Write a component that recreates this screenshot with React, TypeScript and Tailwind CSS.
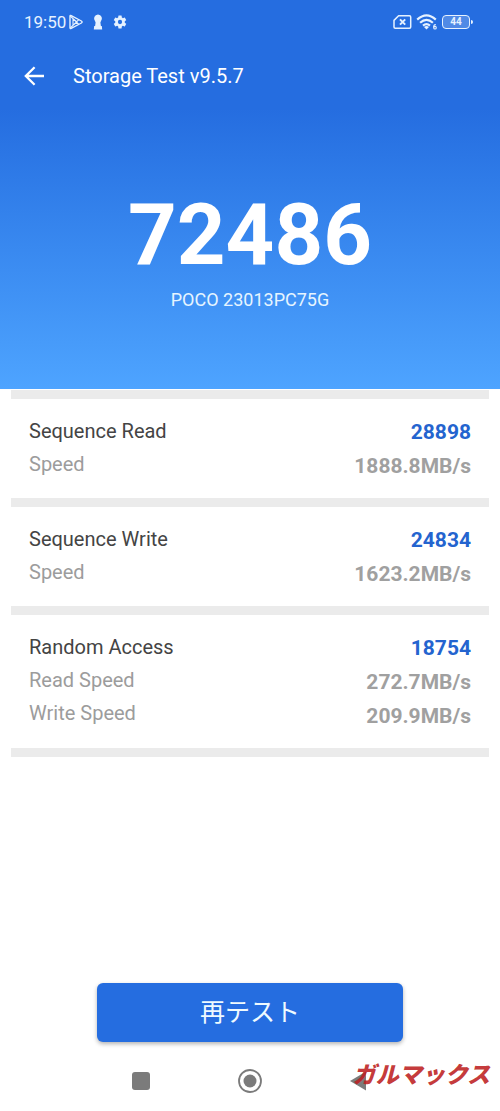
import React from "react";

type Line = { label: string; value: string };
type Result = { title: string; score: string; lines: Line[] };

const results: Result[] = [
  { title: "Sequence Read", score: "28898", lines: [{ label: "Speed", value: "1888.8MB/s" }] },
  { title: "Sequence Write", score: "24834", lines: [{ label: "Speed", value: "1623.2MB/s" }] },
  {
    title: "Random Access",
    score: "18754",
    lines: [
      { label: "Read Speed", value: "272.7MB/s" },
      { label: "Write Speed", value: "209.9MB/s" },
    ],
  },
];

function StatusBar() {
  return (
    <div className="flex h-11 items-center justify-between pr-[27px] pl-6 text-[#e6f2ff]">
      <div className="flex items-center">
        <span className="text-[17px] leading-5">19:50</span>
        <svg className="ml-[2px] h-4 w-4" viewBox="0 0 16 16" fill="none" stroke="currentColor" strokeWidth="1.4" strokeLinejoin="round" aria-hidden="true">
          <path d="M2 2.2Q2 1 3.2 1.6L13.4 7Q14.8 8 13.4 9L3.2 14.4Q2 15 2 13.8Z" />
          <path d="M2.3 2L10.8 10.4M2.3 14L10.8 5.6M5 4.8V11.2L9 8Z" strokeWidth="1.1" />
        </svg>
        <svg className="ml-2 h-4 w-3" viewBox="0 0 12 16" fill="currentColor" aria-hidden="true">
          <path d="M6 .6a4 4 0 0 0-2.8 6.8L3.6 8.6 3.1 12H2.2L1.8 15.4h8.4L9.8 12H8.9l-.5-3.4.4-1.2A4 4 0 0 0 6 .6Z" />
        </svg>
        <svg className="ml-2 h-4 w-4" viewBox="0 0 24 24" fill="currentColor" aria-hidden="true">
          <path d="M19.14 12.94c.04-.3.06-.61.06-.94s-.02-.64-.07-.94l2.03-1.58a.49.49 0 0 0 .12-.61l-1.92-3.32a.49.49 0 0 0-.59-.22l-2.39.96a7 7 0 0 0-1.62-.94l-.36-2.54a.48.48 0 0 0-.48-.41h-3.84a.47.47 0 0 0-.47.41l-.36 2.54c-.59.24-1.13.57-1.62.94l-2.39-.96a.48.48 0 0 0-.59.22L2.74 8.87a.47.47 0 0 0 .12.61l2.03 1.58a7 7 0 0 0 0 1.88l-2.03 1.58a.49.49 0 0 0-.12.61l1.92 3.32c.12.22.37.29.59.22l2.39-.96c.5.38 1.03.7 1.62.94l.36 2.54c.05.24.24.41.48.41h3.84c.24 0 .44-.17.47-.41l.36-2.54a7 7 0 0 0 1.62-.94l2.39.96c.22.08.47 0 .59-.22l1.92-3.32a.47.47 0 0 0-.12-.61zM12 15.2a3.2 3.2 0 1 1 0-6.4 3.2 3.2 0 0 1 0 6.4Z" />
        </svg>
      </div>
      <div className="flex items-center">
        <svg className="h-4 w-[19px]" viewBox="0 0 19 16" fill="none" stroke="currentColor" strokeWidth="1.5" strokeLinejoin="round" aria-hidden="true">
          <path d="M5.6 1.8H16.5Q17.7 1.8 17.7 3V13Q17.7 14.2 16.5 14.2H2.2Q1 14.2 1 13V6.4Z" />
          <path d="M7 5.4L12.2 10.6M12.2 5.4L7 10.6" strokeWidth="2" />
        </svg>
        <svg className="ml-1 h-[18px] w-[22px]" viewBox="0 0 22 18" fill="none" stroke="currentColor" strokeWidth="2.2" aria-hidden="true">
          <path d="M1.2 6.6Q10.5-1.8 19.8 6.6M4.1 9.8Q10.5 4 16.9 9.8M7 12.7Q10.5 9.7 14 12.7" />
          <path d="M8 14Q10.5 11.9 13 14L10.5 16.6Z" fill="currentColor" stroke="none" />
          <path d="M19.8 11.6Q17.6 11.4 17.7 14.4" strokeWidth="1.1" />
          <circle cx="19" cy="14.7" r="1.3" strokeWidth="1.1" />
        </svg>
        <div className="ml-1 flex items-center gap-px">
          <div className="flex h-[14px] w-7 items-center justify-center rounded-[4px] border border-current bg-white/20 text-[10px] leading-none font-bold">
            44
          </div>
          <div className="h-1 w-[2px] rounded-r-sm bg-current" />
        </div>
      </div>
    </div>
  );
}

function ResultCard({ result }: { result: Result }) {
  return (
    <dl className="flex justify-between border-b-9 border-[#ebebeb] px-[18px] pt-4 pb-[15px] text-xl">
      <div>
        <dt className="leading-[33px] text-[#444444]">{result.title}</dt>
        {result.lines.map((line) => (
          <dt key={line.label} className="leading-[33px] text-[#9c9c9c]">{line.label}</dt>
        ))}
      </div>
      <div className="text-right text-[21px] font-bold">
        <dd className="leading-[34px] text-[#2464cf]">{result.score}</dd>
        {result.lines.map((line) => (
          <dd key={line.label} className="leading-[34px] text-[#a0a0a0]">{line.value}</dd>
        ))}
      </div>
    </dl>
  );
}

export default function App() {
  return (
    <div className="flex min-h-screen flex-col bg-white font-['Roboto','Noto_Sans_CJK_JP',sans-serif]">
      <header className="bg-linear-to-b from-[#256de0] from-28% to-[#4ea4ff] pb-[75px] text-white">
        <StatusBar />
        <div className="flex h-16 items-center pl-6">
          <button type="button" aria-label="Back" className="h-5 w-5">
            <svg viewBox="0 0 20 20" className="h-5 w-5" fill="none" stroke="currentColor" strokeWidth="2.3" aria-hidden="true">
              <path d="M20 10H2.2M10.6 1.2L1.8 10L10.6 18.8" />
            </svg>
          </button>
          <h1 className="ml-[29px] text-xl">Storage Test v9.5.7</h1>
        </div>
        <div className="pt-[77px] text-center">
          <p className="text-[85px] leading-[100px] font-bold">72486</p>
          <p className="pt-px text-lg leading-7 text-[#e6f5ff]">POCO 23013PC75G</p>
        </div>
      </header>

      <main className="flex grow flex-col">
        <section className="mx-[11px] mt-px border-t-9 border-[#ebebeb]">
          {results.map((result) => (
            <ResultCard key={result.title} result={result} />
          ))}
        </section>
        <div className="mt-auto px-[97px] pt-10">
          <button type="button" className="h-[59px] w-full rounded-md bg-[#256de0] text-[25px] text-[#eefaff] shadow-[0_2px_4px_rgba(0,0,0,0.3)]">
            再テスト
          </button>
        </div>
      </main>

      <nav className="relative px-[87px] pt-[27px] pb-[18px]">
        <div className="grid grid-cols-3 justify-items-center text-[#7b7b7b]">
          <button type="button" aria-label="Recent apps">
            <svg className="h-6 w-6" viewBox="0 0 24 24" fill="currentColor" aria-hidden="true">
              <rect x="3" y="3" width="18" height="18" rx="3" />
            </svg>
          </button>
          <button type="button" aria-label="Home">
            <svg className="h-6 w-6" viewBox="0 0 24 24" aria-hidden="true">
              <circle cx="12" cy="12" r="11" fill="none" stroke="currentColor" strokeWidth="1.8" />
              <circle cx="12" cy="12" r="6.5" fill="currentColor" />
            </svg>
          </button>
          <button type="button" aria-label="Previous screen">
            <svg className="h-6 w-6" viewBox="0 0 24 24" fill="currentColor" aria-hidden="true">
              <path d="M19 2.5V21.5L3 12Z" />
            </svg>
          </button>
        </div>
        <span className="absolute top-5 right-[10px] text-[23px] leading-7 font-black text-[#bd1f22]/90 italic">ガルマックス</span>
      </nav>
    </div>
  );
}
